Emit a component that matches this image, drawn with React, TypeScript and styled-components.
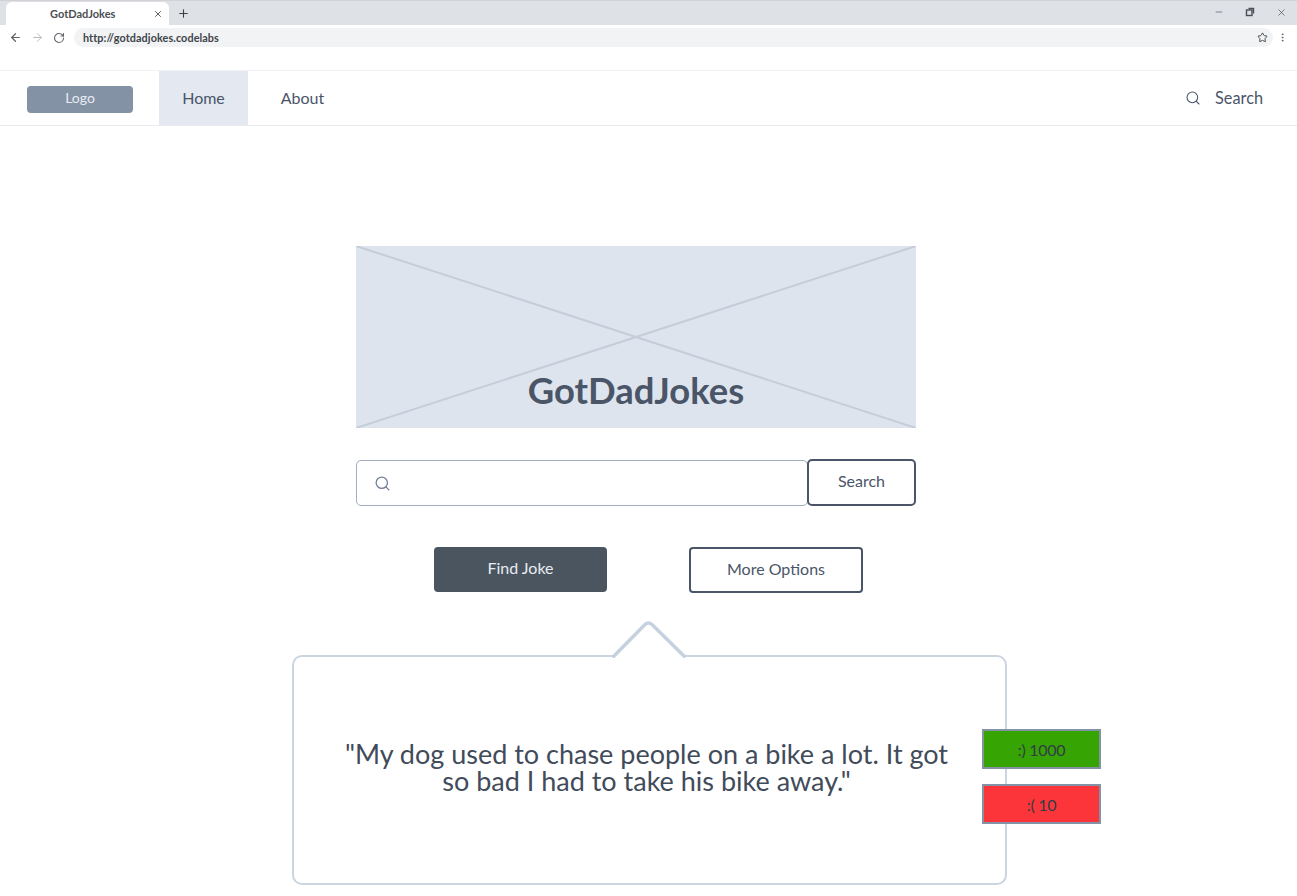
import React from 'react';
import styled, { createGlobalStyle } from 'styled-components';
import { ArrowLeft, ArrowRight, RotateCw, Star, MoreVertical, Minus, X, Plus, Search } from 'lucide-react';

const GlobalStyle = createGlobalStyle`
  html, body {
    margin: 0;
    padding: 0;
    height: 896px;
    overflow: hidden;
    background: #ffffff;
    font-family: 'Lato', 'Liberation Sans', sans-serif;
  }
  * { box-sizing: border-box; }
`;

const Page = styled.div`
  width: 1297px;
  height: 896px;
  display: flex;
  flex-direction: column;
  align-items: center;
`;

const TabStrip = styled.div`
  width: 100%;
  height: 25px;
  background: #dee1e6;
  border-top: 1px solid #d0d2d6;
  display: flex;
  align-items: flex-end;
  padding-left: 6px;
  color: #3c4043;
`;

const Tab = styled.div`
  width: 163px;
  height: 23px;
  background: #ffffff;
  border-radius: 6px 6px 0 0;
  display: flex;
  align-items: center;
  justify-content: space-between;
  padding: 0 6px 0 44px;
  font-size: 11px;
  font-weight: 700;
  color: #4a4f55;
`;

const NewTab = styled.div`
  display: flex;
  align-items: center;
  height: 23px;
  margin-left: 8px;
`;

const WindowControls = styled.div`
  margin-left: auto;
  display: flex;
  align-items: center;
  gap: 21px;
  height: 23px;
  padding: 0 10px 3px 0;
  color: #4a4f55;
`;

const RestoreIcon = styled.svg`
  width: 10px;
  height: 10px;
`;

const Toolbar = styled.div`
  width: 100%;
  height: 23px;
  display: flex;
  align-items: center;
  gap: 9px;
  padding: 2px 9px 0 9px;
  color: #5f6368;
`;

const AddressBar = styled.div`
  flex: 1;
  height: 19px;
  margin-right: -5px;
  background: #f1f3f4;
  border-radius: 10px;
  display: flex;
  align-items: center;
  justify-content: space-between;
  padding: 0 5px 0 9px;
  font-size: 10.8px;
  font-weight: 700;
  color: #3f4449;
  letter-spacing: 0.1px;
`;

const NavBar = styled.nav`
  width: 100%;
  height: 56px;
  margin-top: 22px;
  border-top: 1px solid #f0f2f4;
  border-bottom: 1px solid #e8ebef;
  display: flex;
  align-items: stretch;
  padding: 0 34px 0 27px;
  font-size: 16px;
  color: #4a5568;
`;

const Logo = styled.div`
  width: 106px;
  height: 27px;
  margin: 15px 26px 0 0;
  background: #8492a6;
  border-radius: 4px;
  color: #e8ecf1;
  font-size: 14px;
  display: flex;
  align-items: center;
  justify-content: center;
  padding-bottom: 4px;
`;

const NavItem = styled.div<{ active?: boolean }>`
  width: ${props => (props.active ? '89px' : '109px')};
  background: ${props => (props.active ? '#e3e8f1' : 'transparent')};
  display: flex;
  align-items: center;
  justify-content: center;
  padding-bottom: 1px;
`;

const NavSearch = styled.div`
  margin-left: auto;
  display: flex;
  align-items: center;
  gap: 14px;
  font-size: 16.3px;
  padding-bottom: 1px;
`;

const Hero = styled.div`
  position: relative;
  width: 560px;
  height: 182px;
  margin: 120px 25px 0 0;
  background: #dee4ed;
  display: flex;
  align-items: flex-end;
  justify-content: center;
  padding-bottom: 17px;
`;

const HeroCross = styled.svg`
  position: absolute;
  inset: 0;
  width: 100%;
  height: 100%;
`;

const HeroTitle = styled.h1`
  position: relative;
  margin: 0;
  font-size: 36.4px;
  line-height: 42px;
  font-weight: 700;
  color: #4a5568;
`;

const SearchRow = styled.div`
  width: 560px;
  height: 47px;
  margin: 31px 25px 0 0;
  display: flex;
  align-items: flex-end;
`;

const SearchField = styled.div`
  width: 452px;
  height: 46px;
  background: #ffffff;
  border: 1px solid #a0aec0;
  border-radius: 5px;
  display: flex;
  align-items: center;
  padding-left: 17px;
  color: #718096;
`;

const SearchButton = styled.button`
  width: 109px;
  height: 47px;
  margin-left: -1px;
  background: #ffffff;
  border: 2px solid #4a5568;
  border-radius: 5px;
  font-family: inherit;
  font-size: 16px;
  color: #4a5568;
  padding: 0 0 4px;
`;

const ActionRow = styled.div`
  height: 46px;
  margin-top: 41px;
  display: flex;
  align-items: flex-start;
  gap: 82px;
`;

const ActionButton = styled.button<{ primary?: boolean }>`
  width: ${props => (props.primary ? '173px' : '174px')};
  height: ${props => (props.primary ? '45px' : '46px')};
  background: ${props => (props.primary ? '#4a5560' : '#ffffff')};
  color: ${props => (props.primary ? '#e8ecf1' : '#4a5568')};
  border: ${props => (props.primary ? 'none' : '2px solid #4a5568')};
  border-radius: 4px;
  font-family: inherit;
  font-size: 16px;
  padding: ${props => (props.primary ? '0 0 5px' : '0 0 3px')};
`;

const JokeCard = styled.section`
  position: relative;
  width: 715px;
  height: 230px;
  margin-top: 62px;
  margin-left: 2px;
  border: 2px solid #cbd5e0;
  border-radius: 10px;
  display: flex;
  align-items: center;
  justify-content: center;
  padding: 0 6px 6px 0;
`;

const Caret = styled.svg`
  position: absolute;
  left: 315px;
  top: -37px;
  width: 80px;
  height: 38px;
`;

const JokeText = styled.p`
  margin: 0;
  width: 620px;
  text-align: center;
  font-size: 27px;
  line-height: 27px;
  color: #414b5a;
`;

const VoteStack = styled.div`
  position: absolute;
  left: 688px;
  top: 72px;
  display: flex;
  flex-direction: column;
  gap: 15px;
`;

const VoteButton = styled.div<{ tone: string }>`
  width: 119px;
  height: 40px;
  background: ${props => props.tone};
  border: 2px solid #8492a6;
  color: #333c47;
  font-size: 16px;
  display: flex;
  align-items: center;
  justify-content: center;
  letter-spacing: -0.3px;
`;

export default function App() {
  return (
    <Page>
      <GlobalStyle />
      <TabStrip>
        <Tab>
          GotDadJokes
          <X size={10} strokeWidth={2.2} />
        </Tab>
        <NewTab>
          <Plus size={13} strokeWidth={2} />
        </NewTab>
        <WindowControls>
          <Minus size={10} strokeWidth={1.5} />
          <RestoreIcon viewBox="0 0 10 10" fill="none" stroke="currentColor" strokeWidth="1.4">
            <rect x="1.5" y="3" width="5.5" height="5.5" />
            <path d="M3.5 1.5H8.5V6.5" />
          </RestoreIcon>
          <X size={11} strokeWidth={1.5} />
        </WindowControls>
      </TabStrip>
      <Toolbar>
        <ArrowLeft size={13} strokeWidth={2.2} />
        <ArrowRight size={13} strokeWidth={1.8} color="#b5b8bc" />
        <RotateCw size={12} strokeWidth={2.2} />
        <AddressBar>
          http://gotdadjokes.codelabs
          <Star size={11} strokeWidth={2} />
        </AddressBar>
        <MoreVertical size={11} strokeWidth={2} />
      </Toolbar>
      <NavBar>
        <Logo>Logo</Logo>
        <NavItem active>Home</NavItem>
        <NavItem>About</NavItem>
        <NavSearch>
          <Search size={16} strokeWidth={1.6} />
          Search
        </NavSearch>
      </NavBar>
      <Hero>
        <HeroCross viewBox="0 0 560 182" preserveAspectRatio="none" stroke="#c5cddb" strokeWidth="2">
          <path d="M0 0L560 182M560 0L0 182" />
        </HeroCross>
        <HeroTitle>GotDadJokes</HeroTitle>
      </Hero>
      <SearchRow>
        <SearchField>
          <Search size={17} strokeWidth={1.8} />
        </SearchField>
        <SearchButton>Search</SearchButton>
      </SearchRow>
      <ActionRow>
        <ActionButton primary>Find Joke</ActionButton>
        <ActionButton>More Options</ActionButton>
      </ActionRow>
      <JokeCard>
        <Caret viewBox="0 0 80 38" fill="none">
          <path d="M6 37H74" stroke="#ffffff" strokeWidth="4" />
          <path d="M3.5 37.5L36 4.5Q39.5 1.5 43 4.5L76.5 37.5" stroke="#c5d1de" strokeWidth="3.5" />
        </Caret>
        <JokeText>"My dog used to chase people on a bike a lot. It got so bad I had to take his bike away."</JokeText>
        <VoteStack>
          <VoteButton tone="#36a504">:) 1000</VoteButton>
          <VoteButton tone="#fc353a">:( 10</VoteButton>
        </VoteStack>
      </JokeCard>
    </Page>
  );
}
